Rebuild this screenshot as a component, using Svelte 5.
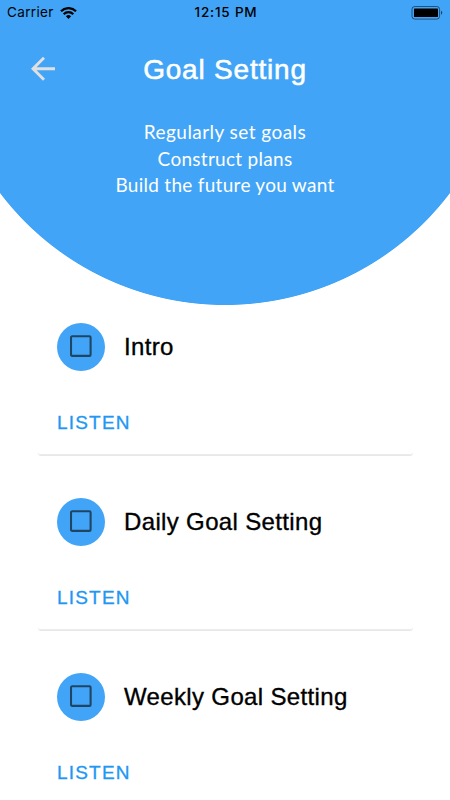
<script lang="ts">
	const goals = ["Regularly set goals", "Construct plans", "Build the future you want"];

	let sessions = $state([
		{ id: "intro", title: "Intro", playing: false },
		{ id: "daily", title: "Daily Goal Setting", playing: false },
		{ id: "weekly", title: "Weekly Goal Setting", playing: false }
	]);
</script>

<div class="screen">
	<header>
		<div class="status">
			<div class="carrier">
				<span>Carrier</span>
				<svg width="17" height="12" viewBox="0 0 17 12" fill="none" stroke="#000" stroke-width="2.3">
					<path d="M1 4.2a10.7 10.7 0 0 1 15 0" />
					<path d="M3.7 7.2a6.8 6.8 0 0 1 9.6 0" />
					<path d="M8.5 12 5.9 9.3a3.7 3.7 0 0 1 5.2 0z" fill="#000" stroke="none" />
				</svg>
			</div>
			<time>12:15 PM</time>
			<svg class="battery" width="32" height="14" viewBox="0 0 32 14">
				<rect x="1" y=".5" width="27.6" height="12.6" rx="2.8" fill="none" stroke="#000" stroke-opacity=".5" />
				<rect x="3" y="2.6" width="24" height="8.4" rx=".6" />
				<path d="M30 4.8c1.7.6 1.7 3.4 0 4z" opacity=".6" />
			</svg>
		</div>

		<div class="toolbar">
			<button class="back" aria-label="Back">
				<svg width="24" height="24" viewBox="0 0 24 24" fill="none" stroke="#e0e0e0" stroke-width="2.9">
					<path d="M13 .8 2 11.8l11 11M2 11.8h22" />
				</svg>
			</button>
			<h1>Goal Setting</h1>
		</div>

		<div class="intro">
			{#each goals as goal}
				<p>{goal}</p>
			{/each}
		</div>
	</header>

	<main>
		{#each sessions as session (session.id)}
			<section class="card">
				<div class="title">
					<span class="avatar">
						<svg width="22" height="22" viewBox="0 0 22 22" fill="none" stroke="#1f4565" stroke-width="2.1">
							<rect x="1" y="1.3" width="19.6" height="19.6" rx="1.2" />
						</svg>
					</span>
					<h2>{session.title}</h2>
				</div>
				<button class="listen" onclick={() => (session.playing = !session.playing)}>LISTEN</button>
			</section>
		{/each}
	</main>
</div>

<style>
	:global(body) {
		margin: 0;
		background: #fff;
	}

	.screen {
		height: 800px;
		overflow: hidden;
		font-family: "Liberation Sans", Arial, sans-serif;
	}

	header {
		height: 305px;
		overflow: hidden;
		background: radial-gradient(circle at 50% 23px, #42a4f6 281.6px, #fff 282.4px);
	}

	.status {
		display: grid;
		grid-template-columns: 1fr auto 1fr;
		align-items: center;
		height: 25px;
		padding: 0 6px 0 7px;
		font: 13.5px/25px Inter, sans-serif;
	}

	.carrier {
		display: flex;
		align-items: center;
		gap: 6px;
		letter-spacing: 0.35px;
	}

	time {
		padding-left: 1px;
		font-weight: 500;
		font-size: 13.5px;
		letter-spacing: 0.8px;
	}

	.battery {
		justify-self: end;
		margin-right: 1px;
	}

	.toolbar {
		display: grid;
		grid-template-columns: 1fr auto 1fr;
		align-items: center;
		height: 88px;
	}

	button {
		padding: 0;
		border: 0;
		background: none;
		cursor: pointer;
	}

	.back {
		display: flex;
		justify-self: start;
		margin-left: 31px;
	}

	h1,
	h2,
	p {
		margin: 0;
		font-weight: normal;
	}

	h1 {
		padding-top: 1px;
		color: #fff;
		font-size: 28px;
		letter-spacing: 0.8px;
		-webkit-text-stroke: 0.55px #fff;
	}

	.intro {
		padding-top: 6px;
		color: #fff;
		font: 19px/26.5px Lato, sans-serif;
		letter-spacing: 0.28px;
		text-align: center;
	}

	.intro p:first-child {
		letter-spacing: 0.45px;
	}

	main {
		display: grid;
		gap: 24px;
		padding: 0 37px 0 38px;
	}

	.card {
		box-sizing: border-box;
		height: 151px;
		margin-top: -1px;
		margin-bottom: 1px;
		padding: 18.5px 19px 0;
		border-bottom: 1px solid #ececec;
		border-radius: 3px;
		box-shadow: 0 1px 0 #e8e8e8;
		clip-path: inset(18px 0 -4px);
	}

	.title {
		display: flex;
		align-items: center;
		gap: 19px;
	}

	.avatar {
		display: flex;
		align-items: center;
		justify-content: center;
		width: 48px;
		height: 48px;
		border-radius: 50%;
		background: #42a4f6;
	}

	.avatar svg {
		margin: 0 1px 1px 0;
	}

	h2 {
		color: #000;
		font-size: 24px;
		letter-spacing: 0.35px;
		-webkit-text-stroke: 0.35px #000;
	}

	.listen {
		display: block;
		margin-top: 40.5px;
		color: #2196f3;
		font: 19px/24px "Liberation Sans", Arial, sans-serif;
		letter-spacing: 1.2px;
		-webkit-text-stroke: 0.3px #2196f3;
	}
</style>
